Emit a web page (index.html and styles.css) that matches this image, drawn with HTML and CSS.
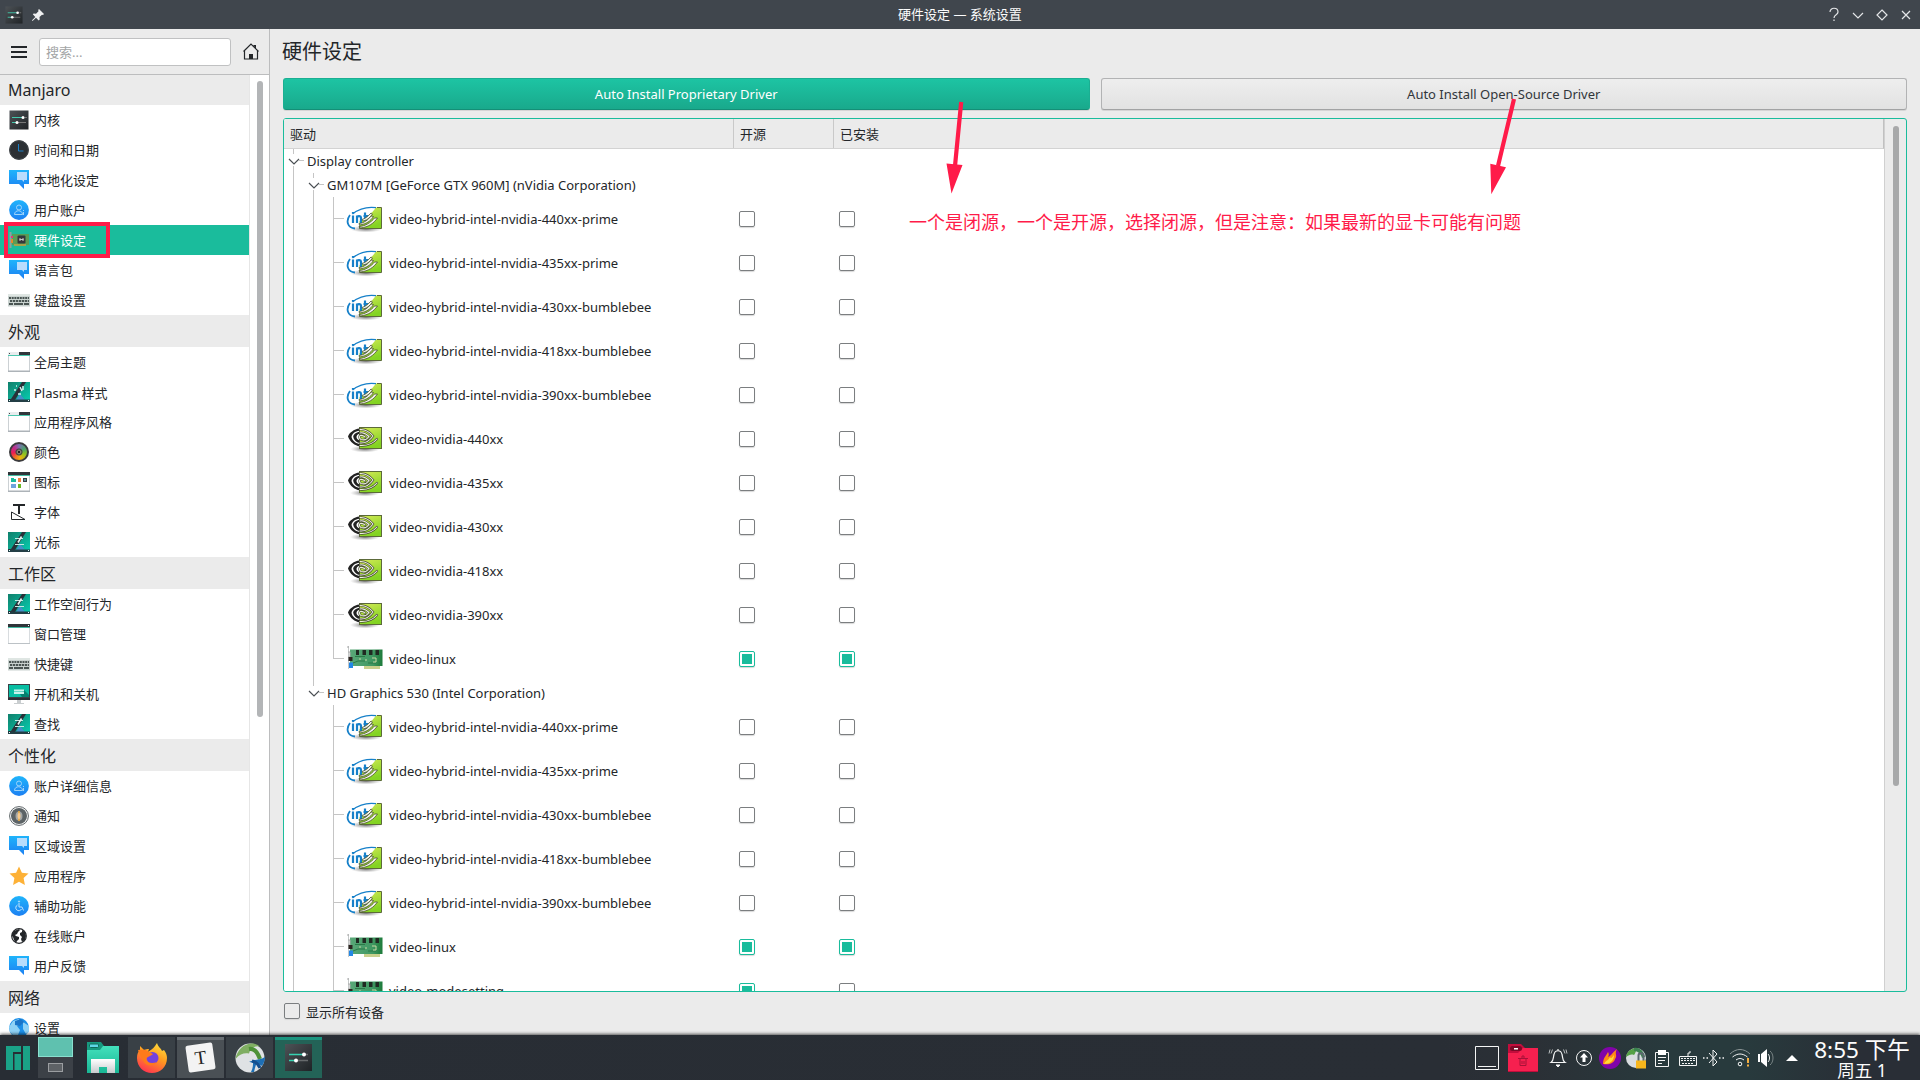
FILE: index.html
```html
<!DOCTYPE html>
<html lang="zh-CN">
<head>
<meta charset="utf-8">
<title>硬件设定 — 系统设置</title>
<link rel="stylesheet" href="styles.css">
</head>
<body>
<svg class="defs" aria-hidden="true">
  <defs>
    <linearGradient id="g-dark" x1="0" y1="0" x2="1" y2="1"><stop offset="0" stop-color="#4d5256"/><stop offset="1" stop-color="#1f2326"/></linearGradient>
    <linearGradient id="g-blue" x1="0" y1="0" x2="0" y2="1"><stop offset="0" stop-color="#1fb4fb"/><stop offset="1" stop-color="#1d80f2"/></linearGradient>
    <linearGradient id="g-teal" x1="0" y1="0" x2="1" y2="1"><stop offset="0" stop-color="#10806c"/><stop offset="1" stop-color="#07cfb2"/></linearGradient>
    <linearGradient id="g-nv" x1="0" y1="0" x2="0.4" y2="1"><stop offset="0" stop-color="#d6ea58"/><stop offset="1" stop-color="#83d322"/></linearGradient>
    <linearGradient id="g-pcb" x1="0" y1="0" x2="1" y2="0"><stop offset="0" stop-color="#5aa878"/><stop offset=".7" stop-color="#3f9862"/><stop offset="1" stop-color="#1d7a3a"/></linearGradient>
    <radialGradient id="g-shadow"><stop offset="0" stop-color="#444" stop-opacity=".8"/><stop offset="1" stop-color="#888" stop-opacity="0"/></radialGradient>
    <linearGradient id="g-fox" x1=".8" y1="0" x2=".3" y2="1"><stop offset="0" stop-color="#ffe03d"/><stop offset=".45" stop-color="#ff9a1f"/><stop offset="1" stop-color="#ff3350"/></linearGradient>
    <linearGradient id="g-folder" x1="0" y1="0" x2="0" y2="1"><stop offset="0" stop-color="#43e0bc"/><stop offset="1" stop-color="#19b795"/></linearGradient>
    <linearGradient id="g-silver" x1="0" y1="0" x2="0" y2="1"><stop offset="0" stop-color="#fff"/><stop offset="1" stop-color="#c6cacc"/></linearGradient>

    <symbol id="i-sliders" viewBox="0 0 22 20">
      <rect x="1.500" y=".5" width="19" height="19" fill="url(#g-dark)"/>
      <path d="M4 7.500h11" stroke="#42c9ad"/><path d="M17 7.500h2" stroke="#777"/><circle cx="15" cy="7.500" r="1.500" fill="#fff"/>
      <path d="M4 12.500h4" stroke="#42c9ad"/><path d="M9 12.500h9" stroke="#777"/><circle cx="9" cy="12.500" r="1.500" fill="#fff"/>
    </symbol>
    <symbol id="i-clock" viewBox="0 0 22 20">
      <circle cx="11" cy="10" r="9.800" fill="#2c3034"/><circle cx="11" cy="10" r="9.300" fill="none" stroke="#42474b"/><path d="M10.500 4v7h5" fill="none" stroke="#1c7fc4"/>
    </symbol>
    <symbol id="i-locale" viewBox="0 0 22 20">
      <path d="M1 0h20v14h-5v5l-5-5H1z" fill="url(#g-blue)"/><path d="M9 2h10v8h-3v2l-2-2H9z" fill="#b9dcfc"/>
    </symbol>
    <symbol id="i-user" viewBox="0 0 22 20">
      <circle cx="11" cy="10" r="9.900" fill="url(#g-blue)"/><g fill="none" stroke="#9ed4fb"><circle cx="11" cy="7.500" r="2.500"/><path d="M6.500 14.500c0-5 8-5 8 0z"/><path d="M15.500 10v1M15.500 12v3"/></g>
    </symbol>
    <symbol id="i-card" viewBox="0 0 22 20">
      <path d="M2.500 2v16" stroke="#8ea29f" stroke-width="2"/><rect x="4" y="4" width="17" height="11" fill="#5b9c55"/><rect x="6" y="14" width="12" height="2" fill="#a8a14a"/><path d="M3 6h2v2H3z" fill="#e8337a"/><path d="M3 9h2v4H3z" fill="#e6862b"/><rect x="9.500" y="5.500" width="8" height="8" rx="1" fill="#34383b"/><path d="M11.500 9.500h4M12 8v3M15 8v3" stroke="#c9ccc9"/>
    </symbol>
    <symbol id="i-keyboard" viewBox="0 0 22 20">
      <rect y="4" width="22" height="12.500" fill="#c9d2cf"/><rect y="4" width="22" height="2" fill="#dfe6e3"/><g stroke="#4a5553" stroke-width="2"><path d="M1 8h20" stroke-dasharray="2 .7"/><path d="M2 11h19" stroke-dasharray="2.300 .7"/><path d="M1 14h4m1 0h9m1 0h5"/></g>
    </symbol>
    <symbol id="i-window" viewBox="0 0 22 20">
      <rect x=".5" y=".5" width="21" height="19" fill="#fff" stroke="#ccd1d4"/><path d="M0 18.500h22v1.500H0z" fill="#adb3b8"/><path d="M0 0h11v3H0z" fill="#e9ecee"/><path d="M11 0h11v3H11z" fill="#30363b"/><path d="M0 3h22v1H0z" fill="#4cc8ae"/><path d="M1 1h1v1H1zM20 1h1v1h-1z" fill="#444"/>
    </symbol>
    <symbol id="i-window2" viewBox="0 0 22 20">
      <rect x=".5" y=".5" width="21" height="19" fill="#fff" stroke="#d8dcdf"/><path d="M0 0h22v3H0z" fill="#2f3439"/><path d="M0 3h22v1H0z" fill="#45bda4"/><path d="M0 19h22v1H0z" fill="#bcc2c6"/><path d="M20 1h1v1h-1z" fill="#fff"/>
    </symbol>
    <symbol id="i-plasma" viewBox="0 0 22 20">
      <rect width="22" height="20" fill="url(#g-teal)"/><path d="M8 18l4-6 5 6z" fill="#438fc8"/><path d="M14 0h4L7 18H0v-1h3z" fill="#293038"/><path d="M0 17.500h22V20H0z" fill="#233e45"/><path d="M1 18h1v1H1zM20 18h1v1h-1z" fill="#dff"/><path d="M7 6.500h8M7 12.500h9" fill="none" stroke="#c6e8e3"/><path d="M13.500 4.500l-3.500 6" stroke="#e4f4f2" stroke-width="1.600"/>
    </symbol>
    <symbol id="i-theme" viewBox="0 0 22 20">
      <rect width="22" height="20" fill="url(#g-teal)"/><path d="M8 18l4-6 5 6z" fill="#438fc8"/><path d="M14 0h4L7 18H0v-1h3z" fill="#293038"/><path d="M0 17.500h22V20H0z" fill="#233e45"/><path d="M1 18h1v1H1zM20 18h1v1h-1z" fill="#dff"/><path d="M8 4h1M6 8h2M12 5l2 4M15 4v4M10 12h3" stroke="#d8f1ee" stroke-width="1.500"/>
    </symbol>
    <symbol id="i-icons" viewBox="0 0 22 20">
      <rect x=".5" y=".5" width="21" height="19" fill="#fff" stroke="#ccd1d4"/><path d="M0 0h22v3H0z" fill="#2f3439"/><path d="M0 3h22v1H0z" fill="#45bda4"/><path d="M0 18.500h22v1.500H0z" fill="#adb3b8"/><path d="M3 6h3v1h2v3H3z" fill="#1abc9c"/><path d="M10 6h3v4h-3z" fill="#f67f40"/><path d="M15 6h4v4h-4z" fill="#3a4045"/><path d="M3 12h5v4H3z" fill="#70a4dc"/><path d="M10 12h3v4h-3z" fill="#69b923"/><path d="M16 8h2" stroke="#7ee"/>
    </symbol>
    <symbol id="i-font" viewBox="0 0 22 20">
      <path d="M5 3h12M11 3v9" stroke="#232629" stroke-width="2"/><path d="M3.500 10v7.500H17z" fill="none" stroke="#232629"/>
    </symbol>
    <symbol id="i-monitor" viewBox="0 0 22 20">
      <rect width="22" height="15" fill="#3a4147"/><rect x="1" y="1" width="20" height="12" fill="#08bea3"/><path d="M12 10l4-4 5 5v2h-7z" fill="#05806f"/><path d="M6 6.500h10M6 9h10" stroke="#c9f3ec" stroke-width="2"/><path d="M0 14h22v2H0z" fill="#2c3136"/><path d="M9 16h4v3h3v1H6v-1h3z" fill="#c9cdcf"/>
    </symbol>
    <symbol id="i-bell" viewBox="0 0 22 20">
      <circle cx="11" cy="10" r="9.400" fill="#fff" stroke="#5c6366"/><circle cx="11" cy="10" r="8" fill="#5c6366"/><ellipse cx="11" cy="10" rx="3.500" ry="4.500" fill="#a3a6a6"/><path d="M11 5v10" stroke="#f0ad3d" stroke-width="1.500"/><ellipse cx="11" cy="10" rx="1.500" ry="3" fill="#f8c98b"/>
    </symbol>
    <symbol id="i-star" viewBox="0 0 22 20">
      <path d="M11 .5l2.900 6.200 6.600.8-4.900 4.600 1.300 6.900L11 15.700 5.100 19l1.300-6.900-4.900-4.600 6.600-.8z" fill="#fdb137"/>
    </symbol>
    <symbol id="i-access" viewBox="0 0 22 20">
      <circle cx="11" cy="10" r="9.900" fill="url(#g-blue)"/><g fill="none" stroke="#bfe4fd"><circle cx="11" cy="5.500" r=".6"/><path d="M11 7v4h3l1.500 3.500M9.500 9a3 3 0 1 0 4 4"/></g>
    </symbol>
    <symbol id="i-globe" viewBox="0 0 22 20">
      <circle cx="11" cy="10" r="7.300" fill="#fff" stroke="#232629" stroke-width="1.200"/><path d="M4 8l2-3 5-2 1 1-2 2-1 2-2 1 1 1 3 1 0 2-2 2-1 2-2-3-1-3-1-1zM14 4l3 2 1 4-1 4-3 2-1-3 1-2-2-2 0-2 2-1z" fill="#232629"/>
    </symbol>
    <symbol id="i-net" viewBox="0 0 22 20">
      <circle cx="11" cy="10" r="9.900" fill="#1c8fe8"/><path d="M1 9l4-6 6-2 1 4-3 3 3 4-2 5-4 1-4-4zM15 4l6 4v6l-3 2-3-5z" fill="#8ed2f6"/><path d="M7 3l6-2 3 3-4 4-5-1z" fill="#1a75c8"/>
    </symbol>

    <symbol id="i-hybrid" viewBox="0 0 38 28">
      <ellipse cx="20" cy="24" rx="16" ry="3.500" fill="url(#g-shadow)"/>
      <path d="M30 2.500h5.500v21h-22V16c6-2 12-7 16.500-13.500z" fill="url(#g-nv)"/>
      <path d="M31 2.500h4.500v21h-22v-3" fill="none" stroke="#5c6a3a"/>
      <path d="M30 2.600C21 1.500 12 4.500 6.500 9" fill="none" stroke="#1680c9" stroke-width="1.200"/>
      <path d="M4 10C-.5 16 1.500 23 9 23.500" fill="none" stroke="#1680c9" stroke-width="1.800"/>
      <g fill="none" stroke="#1680c9" stroke-width="2.200"><path d="M7 10.500v7.500M7 7v1.700M11 18v-7.500M11 12c1-1.200 4-1.200 4 .8V18M19 7.500V16M17.500 11h4.500"/></g>
      <g fill="#f4f5ef" stroke="#4a512f" stroke-width=".8"><path d="M16 14.500c4-1 6.500-4 9-6.500l1.500 1c-2 3-5 6-9 7z"/><path d="M13 18.500c5-.5 9-3.500 12-7.500l2.500.5c-3 4.500-7 7.500-14 8.500z"/><path d="M13 21.500c6-.2 12-4 15.500-8.500h3c-4 5.500-9 9-17 10z"/></g>
    </symbol>
    <symbol id="i-nvidia" viewBox="0 0 38 28">
      <ellipse cx="19" cy="24" rx="15" ry="3.500" fill="url(#g-shadow)"/>
      <rect x="13.500" y="2.500" width="22" height="21" fill="url(#g-nv)" stroke="#5c6a3a"/>
      <path d="M13.500 3.500C8 4 3 8 2 11.500 4 17 9 20.800 13.500 21.300V19C9 18 6 15 5.500 12 6 9 9 6 13.500 5.800z" fill="#222"/>
      <path d="M13.500 6.800C10 7.300 7.500 9.500 7.200 11.700 7.700 14.700 10.200 17.200 13.500 18v-2.500c-2-.7-3-2-3-3.500s1-2.700 3-3.200z" fill="#222"/>
      <g fill="none" stroke-linecap="round"><path d="M14 4.500C20 4 24 7.500 27 11c-3.500 5-7.500 7.500-13 7M14 8c4.500-1 7 1.500 9 3.500-2 3-5 4-8 3-2.500-1.500-2-4 0-4.300 2 0 3 .8 4 1.800M31 14c-4 4.500-10 7-17 6.500" stroke="#41462d" stroke-width="2.200"/>
      <path d="M14 4.500C20 4 24 7.500 27 11c-3.500 5-7.500 7.500-13 7M14 8c4.500-1 7 1.500 9 3.500-2 3-5 4-8 3-2.500-1.500-2-4 0-4.300 2 0 3 .8 4 1.800M31 14c-4 4.500-10 7-17 6.500" stroke="#eef0e4" stroke-width="1.100"/></g>
    </symbol>
    <symbol id="i-pcb" viewBox="0 0 38 28">
      <rect x="4" y="4.500" width="32.500" height="16.500" fill="url(#g-pcb)"/><rect x="18" y="21" width="16" height="3" fill="#c9d08c"/>
      <path d="M2.500 1v23" stroke="#c5c9c9"/><path d="M1 2h2M2 7h2v5H2" stroke="#aaa" fill="none"/>
      <g fill="#202a22"><path d="M10 5h3v5h-3zM16.500 5h3.500v5h-3.500zM23 5h3.500v5H23zM29.500 5h3.500v5h-3.500z"/></g>
      <path d="M9 11.500h10M7 18l5-2h7M22 18h8" stroke="#2a7a47" fill="none"/><path d="M13 14h2M26 13h4v4h-3M19 15h2" stroke="#c9d7a5" fill="none"/>
      <rect x="2.500" y="12" width="4" height="4" fill="#2c2520"/><rect x="3" y="17.500" width="4" height="5.500" fill="#2387e6"/>
    </symbol>
    <symbol id="i-chev" viewBox="0 0 20 24"><path d="M5 10l5 5 5-5" fill="none" stroke="#4b5054" stroke-width="1.200"/></symbol>
  </defs>
</svg>

<header class="titlebar">
  <div class="tb-left">
    <svg width="18" height="18" viewBox="1 0 20 20"><use href="#i-sliders" width="22" height="20"/></svg>
    <svg width="12" height="12" viewBox="0 0 12 12"><path d="M7 0l5 5-1 1-1-.2L7.500 8l.2 2.500-1 .9L4 8.700.8 11.800 0 12l.3-.9L3.300 8 .8 5.300l.9-.8L4 4.700l2.500-2.400L6.200 1z" fill="#eff0f1"/></svg>
  </div>
  <div class="tb-title">硬件设定 — 系统设置</div>
  <div class="tb-right">
    <svg width="96" height="16" viewBox="0 0 96 16" fill="none" stroke="#e4e6e8" stroke-width="1.200"><path d="M6 5c0-5 8-5 8 0 0 3-4 2.500-4 6M10 12.500v1.500"/><path d="M29 6l5 5 5-5"/><path d="M58 3l5 5-5 5-5-5z"/><path d="M78 4l8 8M86 4l-8 8"/></svg>
  </div>
</header>

<div class="window">
  <aside class="sidebar">
    <div class="tools">
      <svg width="16" height="12" viewBox="0 0 16 12"><path d="M0 1h16M0 6h16M0 11h16" stroke="#232629" stroke-width="2"/></svg>
      <div class="search">搜索...</div>
      <svg width="16" height="17" viewBox="0 0 16 17"><path d="M.5 8.500L8 1l7.500 7.500M1.500 8v8h13V8" fill="none" stroke="#232629" stroke-width="1.200"/><path d="M6 11h4v5H6zM10 2h3v4z" fill="#232629"/></svg>
    </div>
    <div class="navwrap">
      <nav class="nav">
        <h2 class="latin">Manjaro</h2>
        <a><svg><use href="#i-sliders"/></svg>内核</a>
        <a><svg><use href="#i-clock"/></svg>时间和日期</a>
        <a><svg><use href="#i-locale"/></svg>本地化设定</a>
        <a><svg><use href="#i-user"/></svg>用户账户</a>
        <a class="active"><svg><use href="#i-card"/></svg>硬件设定</a>
        <a><svg><use href="#i-locale"/></svg>语言包</a>
        <a><svg><use href="#i-keyboard"/></svg>键盘设置</a>
        <h2>外观</h2>
        <a><svg><use href="#i-window"/></svg>全局主题</a>
        <a class="mixed"><svg><use href="#i-theme"/></svg>Plasma 样式</a>
        <a><svg><use href="#i-window"/></svg>应用程序风格</a>
        <a><span class="wheel"></span>颜色</a>
        <a><svg><use href="#i-icons"/></svg>图标</a>
        <a><svg><use href="#i-font"/></svg>字体</a>
        <a><svg><use href="#i-plasma"/></svg>光标</a>
        <h2>工作区</h2>
        <a><svg><use href="#i-plasma"/></svg>工作空间行为</a>
        <a><svg><use href="#i-window2"/></svg>窗口管理</a>
        <a><svg><use href="#i-keyboard"/></svg>快捷键</a>
        <a><svg><use href="#i-monitor"/></svg>开机和关机</a>
        <a><svg><use href="#i-plasma"/></svg>查找</a>
        <h2>个性化</h2>
        <a><svg><use href="#i-user"/></svg>账户详细信息</a>
        <a><svg><use href="#i-bell"/></svg>通知</a>
        <a><svg><use href="#i-locale"/></svg>区域设置</a>
        <a><svg><use href="#i-star"/></svg>应用程序</a>
        <a><svg><use href="#i-access"/></svg>辅助功能</a>
        <a><svg><use href="#i-globe"/></svg>在线账户</a>
        <a><svg><use href="#i-locale"/></svg>用户反馈</a>
        <h2>网络</h2>
        <a><svg><use href="#i-net"/></svg>设置</a>
      </nav>
      <div class="navscroll"><div class="thumb"></div></div>
    </div>
  </aside>

  <main class="main">
    <h1>硬件设定</h1>
    <div class="buttons">
      <button class="btn primary">Auto Install Proprietary Driver</button>
      <button class="btn">Auto Install Open-Source Driver</button>
    </div>
    <section class="tree">
      <div class="table">
        <div class="thead"><span class="c0">驱动</span><span class="c1">开源</span><span class="c2">已安装</span></div>
        <div class="rows">
          <div class="group"><i class="g open line"><svg><use href="#i-chev"/></svg></i>Display controller</div>
          <div class="group"><i class="g line"></i><i class="g open line"><svg><use href="#i-chev"/></svg></i>GM107M [GeForce GTX 960M] (nVidia Corporation)</div>
          <div class="row"><div class="name"><i class="g line"></i><i class="g line"></i><i class="g leaf"></i><svg><use href="#i-hybrid"/></svg>video-hybrid-intel-nvidia-440xx-prime</div><i class="box"></i><i class="box"></i></div>
          <div class="row"><div class="name"><i class="g line"></i><i class="g line"></i><i class="g leaf"></i><svg><use href="#i-hybrid"/></svg>video-hybrid-intel-nvidia-435xx-prime</div><i class="box"></i><i class="box"></i></div>
          <div class="row"><div class="name"><i class="g line"></i><i class="g line"></i><i class="g leaf"></i><svg><use href="#i-hybrid"/></svg>video-hybrid-intel-nvidia-430xx-bumblebee</div><i class="box"></i><i class="box"></i></div>
          <div class="row"><div class="name"><i class="g line"></i><i class="g line"></i><i class="g leaf"></i><svg><use href="#i-hybrid"/></svg>video-hybrid-intel-nvidia-418xx-bumblebee</div><i class="box"></i><i class="box"></i></div>
          <div class="row"><div class="name"><i class="g line"></i><i class="g line"></i><i class="g leaf"></i><svg><use href="#i-hybrid"/></svg>video-hybrid-intel-nvidia-390xx-bumblebee</div><i class="box"></i><i class="box"></i></div>
          <div class="row"><div class="name"><i class="g line"></i><i class="g line"></i><i class="g leaf"></i><svg><use href="#i-nvidia"/></svg>video-nvidia-440xx</div><i class="box"></i><i class="box"></i></div>
          <div class="row"><div class="name"><i class="g line"></i><i class="g line"></i><i class="g leaf"></i><svg><use href="#i-nvidia"/></svg>video-nvidia-435xx</div><i class="box"></i><i class="box"></i></div>
          <div class="row"><div class="name"><i class="g line"></i><i class="g line"></i><i class="g leaf"></i><svg><use href="#i-nvidia"/></svg>video-nvidia-430xx</div><i class="box"></i><i class="box"></i></div>
          <div class="row"><div class="name"><i class="g line"></i><i class="g line"></i><i class="g leaf"></i><svg><use href="#i-nvidia"/></svg>video-nvidia-418xx</div><i class="box"></i><i class="box"></i></div>
          <div class="row"><div class="name"><i class="g line"></i><i class="g line"></i><i class="g leaf"></i><svg><use href="#i-nvidia"/></svg>video-nvidia-390xx</div><i class="box"></i><i class="box"></i></div>
          <div class="row"><div class="name"><i class="g line"></i><i class="g line"></i><i class="g leaf last"></i><svg><use href="#i-pcb"/></svg>video-linux</div><i class="box on"></i><i class="box on"></i></div>
          <div class="group"><i class="g line"></i><i class="g open end"><svg><use href="#i-chev"/></svg></i>HD Graphics 530 (Intel Corporation)</div>
          <div class="row"><div class="name"><i class="g line"></i><i class="g"></i><i class="g leaf"></i><svg><use href="#i-hybrid"/></svg>video-hybrid-intel-nvidia-440xx-prime</div><i class="box"></i><i class="box"></i></div>
          <div class="row"><div class="name"><i class="g line"></i><i class="g"></i><i class="g leaf"></i><svg><use href="#i-hybrid"/></svg>video-hybrid-intel-nvidia-435xx-prime</div><i class="box"></i><i class="box"></i></div>
          <div class="row"><div class="name"><i class="g line"></i><i class="g"></i><i class="g leaf"></i><svg><use href="#i-hybrid"/></svg>video-hybrid-intel-nvidia-430xx-bumblebee</div><i class="box"></i><i class="box"></i></div>
          <div class="row"><div class="name"><i class="g line"></i><i class="g"></i><i class="g leaf"></i><svg><use href="#i-hybrid"/></svg>video-hybrid-intel-nvidia-418xx-bumblebee</div><i class="box"></i><i class="box"></i></div>
          <div class="row"><div class="name"><i class="g line"></i><i class="g"></i><i class="g leaf"></i><svg><use href="#i-hybrid"/></svg>video-hybrid-intel-nvidia-390xx-bumblebee</div><i class="box"></i><i class="box"></i></div>
          <div class="row"><div class="name"><i class="g line"></i><i class="g"></i><i class="g leaf"></i><svg><use href="#i-pcb"/></svg>video-linux</div><i class="box on"></i><i class="box on"></i></div>
          <div class="row"><div class="name"><i class="g line"></i><i class="g"></i><i class="g leaf"></i><svg><use href="#i-pcb"/></svg>video-modesetting</div><i class="box on"></i><i class="box"></i></div>
        </div>
      </div>
      <div class="scroll"><div class="thumb"></div></div>
    </section>
    <label class="showall"><i class="box"></i>显示所有设备</label>
  </main>
</div>

<footer class="panel">
  <svg class="logo" width="24" height="24" viewBox="0 0 24 24"><path d="M0 0h15v6H7v18H0zM8.500 8H15v16H8.500zM17 0h7v24h-7z" fill="#1aa287"/></svg>
  <div class="pager"><span class="desk cur"></span><span class="desk"><i></i></span></div>
  <svg class="files" width="32" height="34" viewBox="0 0 32 34"><path d="M0 1h14l3 4h15v27H0z" fill="#17997f"/><path d="M0 9h13l3-4h16v27H0z" fill="url(#g-folder)"/><rect x="2.500" y="3" width="9" height="3.500" rx="1" fill="#5fd6e6" stroke="#0c6c5b"/><path d="M4 18h24v14h-8v-6h-8v6H4z" fill="url(#g-silver)"/></svg>
  <div class="tasks">
    <div class="task"><svg width="32" height="32" viewBox="0 0 32 32"><path d="M16 31C8 31 1 25 1 16c0-4 1-6 3-8V4l4 4c2-1 3-1 5-1l-1 3c2-2 5-3 7-6l2-3c1 4 4 5 5 8l2-1c2 3 3 5 3 8 0 9-7 15-15 15z" fill="url(#g-fox)"/><circle cx="16.500" cy="16" r="6" fill="#7442dd"/><path d="M2 8c4 0 8-1 11 2l4 2c-2 2-5 2-7 5 1 4 6 5 11 3-4 5-11 4-13 0C6 17 3 12 2 8z" fill="#ff7a1a"/></svg></div>
    <div class="task busy"><div class="typora">T</div></div>
    <div class="task"><svg width="32" height="32" viewBox="0 0 32 32"><circle cx="16" cy="16" r="14.500" fill="#dfe2e4"/><path d="M1.500 17C3 8 10 1 19 1.500c3 .3 5 1.500 7 3-6-1-10 2-11 7-4-1-9 0-13.500 5.500z" fill="#7fae62"/><path d="M15 7c6-1 9 4 11 10" fill="none" stroke="#4d9138" stroke-width="4"/><path d="M31 15c0 3-1 6-3 9l-5-3c-2 3-2 6-3 9h-3c2-4 2-7 2-9-2-1-3-1-4-1 4-3 10-1 16-5z" fill="#1d6fb5"/><path d="M18 19c4 1 7 4 8 7" fill="none" stroke="#144f8e" stroke-width="3"/></svg></div>
    <div class="task current"><svg width="27" height="27" viewBox="0 0 27 27"><rect width="27" height="27" fill="url(#g-dark)"/><path d="M4 10.500h15M4 16.500h6" stroke="#37d1b1" stroke-width="1.500"/><path d="M20 10.500h3M12 16.500h11" stroke="#666a6c" stroke-width="1.500"/><circle cx="19" cy="10.500" r="2" fill="#fff"/><circle cx="11" cy="16.500" r="2" fill="#fff"/></svg></div>
  </div>
  <svg class="tray" width="330" height="36" viewBox="0 0 330 36" fill="none" stroke="#f4f5f5">
    <path d="M1.500 6.500h23v23h-23zM4 26.500h18"/>
    <g stroke="none"><path d="M34 4h13l4 4h13v24H34z" fill="#c20d3c"/><path d="M34 13h10l5-5h15v23H34z" fill="#f6204f"/><rect x="36" y="6" width="12" height="5" rx="2.500" fill="#7c0827"/><path d="M40 8h4v1.500h-4z" fill="#fff"/></g>
    <path d="M44 18.500h10M46 18.500v7h6v-7M48 18v-2h2v2M48 21v3M50 21v3" stroke="#a81138"/>
    <path d="M77 22.500h14c-3-2-2-5-3-8-1-5-7-5-8 0-1 3 0 6-3 8zM84 9v2" stroke-width="1.200"/><path d="M78.500 9.500l-1.500 4M76 9.500l-1 4M89.500 9.500l1.500 4M92 9.500l1 4" stroke="#b9bdbe"/><path d="M82 25h4l-2 2z" fill="#fff"/>
    <circle cx="110" cy="18" r="7.500"/><path d="M110 13l4 4.500h-2.500V22h-3v-4.500H106z" fill="#fff" stroke="none"/>
    <g stroke="none"><circle cx="136" cy="18" r="11" fill="#8104a9"/><path d="M129 24c0-6 3-8 5-12 1 2 1 3 0 5 3-1 4-4 9-8-3 5 1 6-2 10-1 4-5 6-12 5z" fill="#ff8a16"/><path d="M130 24c2-4 4-3 6-7 1 3 3-1 4-2 0 6-4 9-10 9z" fill="#ffda35"/>
    <circle cx="162" cy="18" r="10" fill="#d9dde0"/><path d="M152 17c1-6 6-10 12-8-3 2-2 4-4 6-3-1-5 0-8 2z" fill="#55a146"/><path d="M160 8c6-1 10 4 11 9l-3 1c-1-4-4-7-8-7z" fill="#3d8351"/></g>
    <path d="M164.500 21v-5.500c0-3 5-3 5 0V21" stroke="#5c6870" stroke-width="2"/><path d="M162 20.500h10v8h-10z" fill="#f7b61c" stroke="none"/>
    <path d="M181.500 12.500h13v14h-13zM184 17.500h8M184 20.500h7M184 23.500h4"/><path d="M184 10h8v5h-8z" fill="#fff" stroke="none"/>
    <path d="M205.500 16.500h17v9h-17zM214 16v-3h2v-2"/><path d="M207 18.500h14M207 20.500h14M208 23.500h12" stroke-dasharray="2 1"/>
    <path d="M235 13l8 9-4 4V10l4 4-8 9"/><path d="M229 18h5M245 18h6" stroke-dasharray="1.500 2" stroke-width="1.500"/>
    <path d="M256 14c6-6 14-6 20 0" stroke="#8b9596"/><path d="M258.500 17c5-4 10-4 15 0M262 20c3-2 5-2 8 0"/><circle cx="266" cy="24" r="1.800"/><path d="M274 18v5M274 24.500v2" stroke="#f5b041" stroke-width="2"/>
    <path d="M284 14h2v8h-2zM287 14l6-5v18l-6-5z" fill="#fff" stroke="none"/><path d="M294 14c2 2 2 6 0 8"/><path d="M296 11c4 3 4 11 0 14" stroke="#788384"/>
    <path d="M312 21l6-6 6 6z" fill="#fff" stroke="none"/>
  </svg>
  <div class="clock"><div class="time">8:55 下午</div><div class="date">周五 1</div></div>
</footer>

<div class="mark-box"></div>
<svg class="mark-arrows" width="1920" height="260" viewBox="0 0 1920 260" fill="#ff1b49"><path d="M961.200 102L955 166M1514 99l-16 67" stroke="#ff1b49" stroke-width="4.200"/><path d="M946.500 163.500l16 1.500-11 28.500zM1490.300 163.800l15.700 3.500-14.700 27z"/></svg>
<div class="mark-note">一个是闭源，一个是开源，选择闭源，但是注意：如果最新的显卡可能有问题</div>
</body>
</html>
```
FILE: styles.css
```css
* { box-sizing: border-box; }
html, body { margin: 0; height: 100%; overflow: hidden; }
body {
  display: flex;
  flex-direction: column;
  position: relative;
  width: 1920px;
  height: 1080px;
  font-family: "Noto Sans", "Noto Sans CJK SC", sans-serif;
  font-size: 13px;
  color: #232629;
  background: #ebebeb;
}
i { font-style: normal; }
h1, h2 { margin: 0; font-weight: 400; }
.defs { position: absolute; width: 0; height: 0; }

.titlebar {
  display: grid;
  grid-template-columns: 1fr auto 1fr;
  align-items: center;
  flex: none;
  height: 29px;
  background: #40464d;
  color: #fcfcfc;
}
.tb-left { display: flex; align-items: center; gap: 9px; padding-left: 5px; }
.tb-title { line-height: 29px; }
.tb-right { display: flex; justify-content: flex-end; }

.window { display: flex; height: 1006px; flex: none; }
.sidebar {
  display: flex;
  flex-direction: column;
  flex: none;
  width: 270px;
  border-right: 1px solid #bcbdbe;
}
.tools {
  display: flex;
  align-items: center;
  flex: none;
  height: 46px;
  padding-left: 11px;
  border-bottom: 1px solid #bcbdbe;
}
.search {
  width: 192px;
  height: 28px;
  margin: 0 12px;
  padding-left: 6px;
  border: 1px solid #c0c1c2;
  border-radius: 3px;
  background: #fff;
  color: #a3a5a6;
  line-height: 27px;
}
.navwrap { display: flex; flex: 1; min-height: 0; background: #fff; }
.nav { width: 250px; border-right: 1px solid #e6e6e6; overflow: hidden; }
.nav h2 {
  height: 32px;
  padding-left: 8px;
  background: #ebebeb;
  font-size: 16px;
  line-height: 34px;
}
.nav h2.latin { height: 30px; line-height: 31px; }
.nav a { display: flex; height: 30px; padding-left: 8px; line-height: 30px; }
.nav a.mixed { line-height: 32px; }
.nav a svg { flex: none; width: 22px; height: 20px; margin: 5px 4px 0 0; }
.nav a.active { background: #1abc9c; color: #fff; }
.wheel {
  flex: none;
  width: 20px;
  height: 20px;
  margin: 5px 5px 0 1px;
  border: 2px solid #3b3b3d;
  border-radius: 50%;
  background: radial-gradient(circle, #222 1px, #8a8578 1.5px, #44423f 3px, transparent 4px),
    conic-gradient(#7c6fb0, #4aa06a 60deg, #8fc51e 110deg, #f0b010 170deg, #f07a20 210deg, #ee1e50 260deg, #c02a8a 310deg, #7c6fb0);
}
.navscroll { padding: 6px 0 0 7px; }
.thumb { border-radius: 3px; background: #b3b5b7; }
.navscroll .thumb { width: 6px; height: 636px; }

.main { display: flex; flex-direction: column; flex: 1; padding: 0 13px 0 13px; }
h1 { height: 49px; margin-left: -1px; font-size: 20px; line-height: 45px; }
.buttons { display: grid; grid-template-columns: 1fr 1fr; gap: 11px; height: 32px; }
.btn {
  padding: 0;
  border: 1px solid #b2b3b4;
  border-bottom-color: #a2a3a4;
  border-radius: 3px;
  background: linear-gradient(#eeeeee, #e2e2e2);
  box-shadow: 0 1px 0 #d4d4d4;
  color: #31363b;
  font: inherit;
  line-height: 29px;
}
.btn.primary {
  border-color: #1aaf92;
  border-bottom-color: #148f77;
  background: linear-gradient(#1dc4a3, #19a98c);
  color: #fff;
}
.tree {
  display: flex;
  flex: none;
  height: 874px;
  margin-top: 8px;
  border: 1px solid #1abc9c;
  border-radius: 3px;
  overflow: hidden;
}
.table { display: flex; flex-direction: column; flex: 1; background: #fff; }
.thead {
  display: flex;
  flex: none;
  height: 30px;
  background: #ebebeb;
  border-right: 1px solid #c0c0c0;
  border-bottom: 1px solid #d3d3d3;
  line-height: 30px;
}
.c0 { width: 450px; padding-left: 6px; border-right: 1px solid #c9c9c9; }
.c1 { width: 100px; padding-left: 6px; border-right: 1px solid #c9c9c9; }
.c2 { padding-left: 6px; }
.rows { flex: 1; min-height: 0; overflow: hidden; }
.group { display: flex; height: 24px; line-height: 24px; }
.row { display: flex; align-items: center; height: 44px; }
.name { display: flex; flex: none; width: 455px; line-height: 44px; }
.name > svg { width: 38px; height: 28px; margin: 8px 5px 0 2px; }
.g {
  --ln: #c5c5c5;
  flex: none;
  width: 20px;
  background-repeat: no-repeat;
}
.line { background-image: linear-gradient(var(--ln), var(--ln)); background-size: 1px 100%; background-position: 9px 0; }
.open { width: 23px; }
.open svg { display: block; width: 20px; height: 24px; }
.open.line, .open.end {
  background-image: linear-gradient(var(--ln), var(--ln)), linear-gradient(var(--ln), var(--ln)), linear-gradient(var(--ln), var(--ln));
  background-size: 1px 5px, 1px 7px, 5px 1px;
  background-position: 9px 0, 9px 17px, 15px 11px;
}
.open.end { background-size: 1px 5px, 0 0, 5px 1px; }
.leaf {
  background-image: linear-gradient(var(--ln), var(--ln)), linear-gradient(var(--ln), var(--ln));
  background-size: 1px 100%, 11px 1px;
  background-position: 9px 0, 9px 21px;
}
.leaf.last { background-size: 1px 21px, 11px 1px; }
.box {
  flex: none;
  width: 16px;
  height: 16px;
  margin-right: 84px;
  border: 1px solid #7b7e80;
  border-radius: 2px;
  box-shadow: 0 1px 1px #d8d8d8;
}
.box.on { padding: 2px; border-color: #1abc9c; background: #1abc9c content-box; }
.scroll { width: 22px; padding: 7px 0 0 8px; border-left: 1px solid #d0d0d0; }
.scroll .thumb { width: 6px; height: 660px; background: #a8a9aa; }
.showall { display: flex; align-items: center; height: 38px; padding-left: 1px; }
.showall .box { margin-right: 6px; }

.panel {
  display: flex;
  flex: none;
  position: relative;
  height: 45px;
  background: linear-gradient(90deg, #282d34, #292e35 75%, #2b3036 80%, #283a3d 87%, #283a3d 91%, #292e36 97%);
  box-shadow: 0 -1px 3px rgba(0, 0, 0, .65);
}
.logo { margin: 11px 8px 0 6px; }
.pager { width: 35px; margin-top: 2px; }
.desk { display: block; height: 21px; background: #3c4147; }
.desk.cur { height: 20px; background: #5fc1af; border: 1px solid #8ae0cf; }
.desk i { display: block; width: 15px; height: 9px; margin: 0 auto; border: 1px solid #9b9ea1; background: #5e6266; transform: translateY(6px); }
.files { margin: 6px 9px 0 14px; }
.tasks { display: flex; gap: 2px; margin-top: 2px; height: 41px; }
.task { display: flex; align-items: center; justify-content: center; width: 47px; background: #394046; }
.task.busy { background: #4a5055; border-top: 3px solid #6a7075; padding-bottom: 3px; }
.task.current { background: #236357; border-top: 3px solid #1c9580; padding-bottom: 3px; }
.typora {
  width: 27px;
  height: 27px;
  border-radius: 2px;
  background: #f3f3f3;
  color: #222;
  font: 19px/27px "Liberation Serif", serif;
  text-align: center;
  transform: rotate(-8deg);
}
.tray { margin: 5px 0 0 1152px; flex: none; }
.clock { flex: 1; color: #fcfcfc; text-align: center; }
.time { height: 26px; font-size: 22.5px; line-height: 29px; white-space: nowrap; }
.date { font-size: 17.5px; line-height: 18px; height: 18px; white-space: nowrap; }

.mark-box { position: absolute; left: 4px; top: 222px; width: 106px; height: 36px; border: 4px solid #ff1b49; }
.mark-arrows { position: absolute; left: 0; top: 0; pointer-events: none; }
.mark-note { position: absolute; left: 909px; top: 208px; color: #ff1b49; font-size: 18px; line-height: 28px; white-space: nowrap; }
```
